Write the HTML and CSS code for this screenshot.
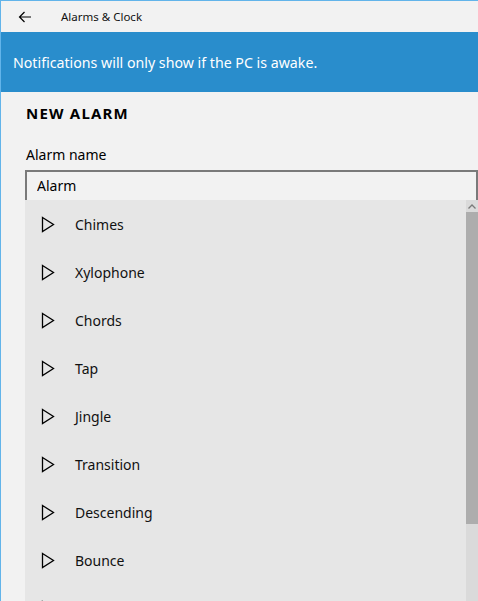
FILE: index.html
```html
<!DOCTYPE html>
<html lang="en">
  <head>
    <meta charset="UTF-8" />
    <title>Alarms &amp; Clock</title>
    <link rel="stylesheet" href="styles.css">
  </head>
  <body>
    <div class="window">
      <header class="titlebar">
        <svg class="back" width="14" height="12" viewBox="0 0 14 12">
          <path d="M13 6H1.5M6.5 1L1.5 6l5 5" fill="none" stroke="#000" stroke-width="1.2" />
        </svg>
        <span class="title">Alarms &amp; Clock</span>
      </header>

      <div class="banner">Notifications will only show if the PC is awake.</div>

      <main class="content">
        <h2 class="heading">NEW ALARM</h2>
        <label class="field-label" for="alarmName">Alarm name</label>
        <div class="combo">
          <input id="alarmName" class="name-input" type="text" value="Alarm" />
          <div class="dropdown">
            <ul class="sounds">
              <li><svg class="play" width="14" height="17" viewBox="0 0 14 17"><path d="M1.5 1.5L12.5 8.5L1.5 15.5Z" fill="none" stroke="#000" stroke-width="1.3" /></svg>Chimes</li>
              <li><svg class="play" width="14" height="17" viewBox="0 0 14 17"><path d="M1.5 1.5L12.5 8.5L1.5 15.5Z" fill="none" stroke="#000" stroke-width="1.3" /></svg>Xylophone</li>
              <li><svg class="play" width="14" height="17" viewBox="0 0 14 17"><path d="M1.5 1.5L12.5 8.5L1.5 15.5Z" fill="none" stroke="#000" stroke-width="1.3" /></svg>Chords</li>
              <li><svg class="play" width="14" height="17" viewBox="0 0 14 17"><path d="M1.5 1.5L12.5 8.5L1.5 15.5Z" fill="none" stroke="#000" stroke-width="1.3" /></svg>Tap</li>
              <li><svg class="play" width="14" height="17" viewBox="0 0 14 17"><path d="M1.5 1.5L12.5 8.5L1.5 15.5Z" fill="none" stroke="#000" stroke-width="1.3" /></svg>Jingle</li>
              <li><svg class="play" width="14" height="17" viewBox="0 0 14 17"><path d="M1.5 1.5L12.5 8.5L1.5 15.5Z" fill="none" stroke="#000" stroke-width="1.3" /></svg>Transition</li>
              <li><svg class="play" width="14" height="17" viewBox="0 0 14 17"><path d="M1.5 1.5L12.5 8.5L1.5 15.5Z" fill="none" stroke="#000" stroke-width="1.3" /></svg>Descending</li>
              <li><svg class="play" width="14" height="17" viewBox="0 0 14 17"><path d="M1.5 1.5L12.5 8.5L1.5 15.5Z" fill="none" stroke="#000" stroke-width="1.3" /></svg>Bounce</li>
              <li class="partial"><svg class="play" width="14" height="17" viewBox="0 0 14 17"><path d="M1.5 1.5L12.5 8.5L1.5 15.5Z" fill="none" stroke="#000" stroke-width="1.3" /></svg></li>
            </ul>
            <div class="scrollbar">
              <div class="arrow">
                <svg width="8" height="5" viewBox="0 0 8 5"><path d="M0.5 4.5L4 1l3.5 3.5" fill="none" stroke="#7a7a7a" stroke-width="1.3" /></svg>
              </div>
              <div class="thumb"></div>
              <div class="track"></div>
              <div class="arrow">
                <svg width="8" height="5" viewBox="0 0 8 5"><path d="M0.5 0.5L4 4l3.5-3.5" fill="none" stroke="#7a7a7a" stroke-width="1.3" /></svg>
              </div>
            </div>
          </div>
        </div>
      </main>
    </div>
  </body>
</html>
```

FILE: styles.css
```css
* {
  margin: 0;
  padding: 0;
  box-sizing: border-box;
}

html,
body {
  height: 601px;
  overflow: hidden;
}

body {
  font-family: "Noto Sans", "Open Sans", sans-serif;
  background: #f2f2f2;
  color: #000;
}

.window {
  height: 601px;
  display: flex;
  flex-direction: column;
  border-top: 1px solid #62b4ea;
  border-left: 1px solid #62b4ea;
  overflow: hidden;
}

.titlebar {
  height: 31px;
  display: flex;
  align-items: center;
  padding-left: 17px;
  flex-shrink: 0;
}

.back {
  display: block;
}

.title {
  margin-left: 29px;
  font-size: 11.5px;
  color: #111;
}

.banner {
  height: 60px;
  flex-shrink: 0;
  background: #298dcc;
  color: #fff;
  font-size: 14.2px;
  padding-left: 12px;
  display: flex;
  align-items: center;
}

.content {
  padding: 10px 0 0 25px;
  flex: 1;
  min-height: 0;
}

.heading {
  font-size: 15px;
  font-weight: 700;
  letter-spacing: 1.2px;
  line-height: 22px;
}

.field-label {
  display: block;
  margin-top: 21px;
  font-size: 14px;
  line-height: 20px;
}

.combo {
  margin-top: 5px;
  margin-left: -1px;
  width: 453px;
}

.name-input {
  display: block;
  width: 100%;
  height: 30px;
  border: 2px solid #7a7a7a;
  border-bottom: none;
  background: #f2f2f2;
  font-family: inherit;
  font-size: 14px;
  padding: 0 10px 1px;
  outline: none;
  color: #000;
}

.dropdown {
  display: flex;
  background: #e6e6e6;
  height: 420px;
}

.sounds {
  list-style: none;
  flex: 1;
}

.sounds li {
  height: 48px;
  display: flex;
  align-items: center;
  padding-left: 16px;
  font-size: 14px;
  color: #111;
}

.play {
  display: block;
  margin-right: 20px;
  flex-shrink: 0;
}

.scrollbar {
  width: 12px;
  display: flex;
  flex-direction: column;
  background: #dadada;
}

.arrow {
  height: 12px;
  display: flex;
  align-items: center;
  justify-content: center;
}

.thumb {
  height: 312px;
  background: #adadad;
}

.track {
  flex: 1;
}
```
